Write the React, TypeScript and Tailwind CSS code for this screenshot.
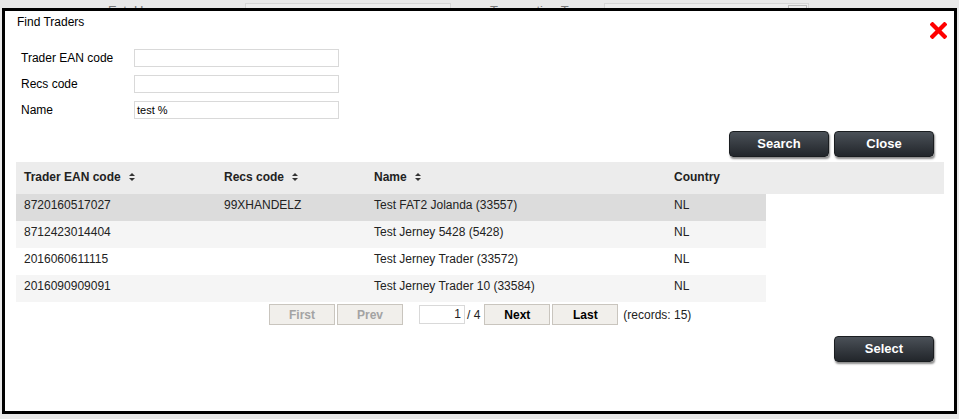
import React from "react";

const font = { fontFamily: '"Liberation Sans", Arial, sans-serif' };

function SortIcon() {
  return (
    <svg width="6" height="8" viewBox="0 0 6 8" className="ml-[8px] inline-block">
      <polygon points="3,0 6,3 0,3" fill="#333" />
      <polygon points="0,5 6,5 3,8" fill="#333" />
    </svg>
  );
}

function DarkButton({ label }: { label: string }) {
  return (
    <button className="w-[100px] h-[26px] rounded-[4px] bg-gradient-to-b from-[#4b5158] to-[#22262b] text-white text-[13px] font-bold shadow-[1px_2px_2px_rgba(0,0,0,0.45)] border border-[#1a1d20]">
      {label}
    </button>
  );
}

function PagerButton({ label, disabled }: { label: string; disabled?: boolean }) {
  return (
    <button
      className={`w-[66px] h-[21px] border border-[#c9c5be] bg-[#f1efeb] text-[12px] font-bold ${
        disabled ? "text-[#a3a3a3]" : "text-black"
      }`}
    >
      {label}
    </button>
  );
}

const rows = [
  { ean: "8720160517027", recs: "99XHANDELZ", name: "Test FAT2 Jolanda (33557)", country: "NL", bg: "bg-[#dcdcdc]" },
  { ean: "8712423014404", recs: "", name: "Test Jerney 5428 (5428)", country: "NL", bg: "bg-[#f5f5f5]" },
  { ean: "2016060611115", recs: "", name: "Test Jerney Trader (33572)", country: "NL", bg: "bg-white" },
  { ean: "2016090909091", recs: "", name: "Test Jerney Trader 10 (33584)", country: "NL", bg: "bg-[#f5f5f5]" },
];

export default function App() {
  return (
    <div className="relative w-[959px] h-[419px] bg-[#e8e8e8] overflow-hidden text-[12px] text-[#222]" style={font}>
      {/* background page remnants */}
      <div className="absolute left-[108px] top-[1px] text-[13px] text-[#777]">Ext. User</div>
      <div className="absolute left-[245px] top-[3px] w-[206px] h-[16px] border border-[#d6d6d6] bg-[#ececec] text-[11px] text-[#bbb] pl-[3px]">
        Ext.User - 33333 (33333)
      </div>
      <div className="absolute left-[490px] top-[1px] text-[13px] text-[#777]">Transaction Type</div>
      <div className="absolute left-[604px] top-[3px] w-[205px] h-[16px] border border-[#d6d6d6] bg-[#ececec]" />
      <div className="absolute left-[788px] top-[5px] w-[19px] h-[12px] border border-[#bdbdbd] bg-[#ececec]" />

      {/* modal dialog */}
      <div className="absolute left-[2px] top-[8px] w-[955px] h-[406px] border-[3px] border-black bg-white flex flex-col">
        <div className="flex items-start justify-between h-[38px]">
          <div className="ml-[12px] mt-[4px] text-[12px] text-black leading-[14px]">Find Traders</div>
          <svg width="17" height="17" viewBox="0 0 17 17" className="mt-[11px] mr-[7px]">
            <line x1="2.5" y1="2.5" x2="14.5" y2="14.5" stroke="#ff0000" strokeWidth="4.2" strokeLinecap="square" />
            <line x1="14.5" y1="2.5" x2="2.5" y2="14.5" stroke="#ff0000" strokeWidth="4.2" strokeLinecap="square" />
          </svg>
        </div>

        <div className="flex flex-col gap-[8px] ml-[16px]">
          {[
            { label: "Trader EAN code", value: "" },
            { label: "Recs code", value: "" },
            { label: "Name", value: "test %" },
          ].map((f) => (
            <div key={f.label} className="flex items-center h-[18px]">
              <div className="w-[113px] text-[12px] text-black leading-[14px] -mt-[1px]">{f.label}</div>
              <div className="w-[205px] h-[18px] border border-[#d9d9d9] bg-white text-[11px] text-black pl-[2px] leading-[16px]">
                {f.value}
              </div>
            </div>
          ))}
        </div>

        <div className="flex justify-end gap-[5px] mt-[12px] mr-[20px]">
          <DarkButton label="Search" />
          <DarkButton label="Close" />
        </div>

        <div className="ml-[11px] mt-[5px] w-[928px]">
          <div className="flex items-start h-[32px] pt-[8px] leading-[14px] bg-[#ececec] font-bold text-[12px] text-[#222]">
            <div className="w-[200px] pl-[8px] flex items-center">Trader EAN code<SortIcon /></div>
            <div className="w-[150px] pl-[8px] flex items-center">Recs code<SortIcon /></div>
            <div className="w-[300px] pl-[8px] flex items-center">Name<SortIcon /></div>
            <div className="w-[92px] pl-[8px]">Country</div>
          </div>
          {rows.map((r) => (
            <div key={r.ean} className={`flex items-start pt-[4px] leading-[14px] h-[27px] w-[750px] ${r.bg} text-[12px] text-[#222]`}>
              <div className="w-[200px] pl-[8px]">{r.ean}</div>
              <div className="w-[150px] pl-[8px]">{r.recs}</div>
              <div className="w-[300px] pl-[8px]">{r.name}</div>
              <div className="w-[100px] pl-[8px]">{r.country}</div>
            </div>
          ))}
        </div>

        <div className="flex items-center mt-[2px] ml-[264px] h-[21px] text-[12px] text-[#222]">
          <PagerButton label="First" disabled />
          <div className="w-[2px]" />
          <PagerButton label="Prev" disabled />
          <div className="ml-[16px] w-[46px] h-[19px] border border-[#d9d9d9] bg-white text-right pr-[3px] leading-[17px]">1</div>
          <span className="ml-[2px] mr-[4px]">/ 4</span>
          <PagerButton label="Next" />
          <div className="w-[2px]" />
          <PagerButton label="Last" />
          <span className="ml-[5px]">(records: 15)</span>
        </div>

        <div className="flex justify-end mt-[11px] mr-[20px]">
          <DarkButton label="Select" />
        </div>
      </div>
    </div>
  );
}
